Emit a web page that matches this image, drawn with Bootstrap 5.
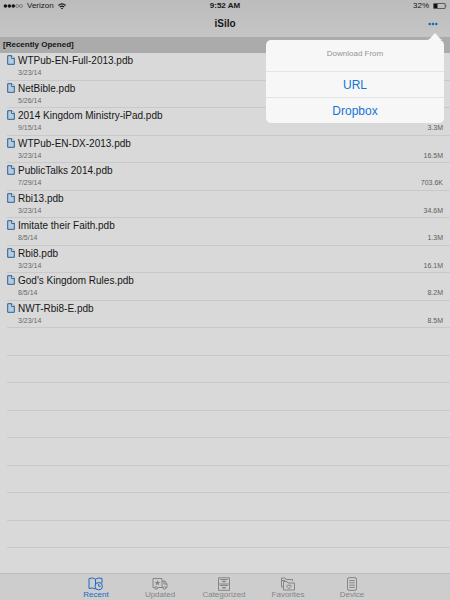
<!DOCTYPE html>
<html lang="en">
<head>
<meta charset="utf-8">
<meta name="viewport" content="width=device-width, initial-scale=1">
<title>iSilo</title>
<link href="https://cdn.jsdelivr.net/npm/bootstrap@5.3.0/dist/css/bootstrap.min.css" rel="stylesheet">
<style>
  body { font-family: "Liberation Sans", Arial, sans-serif; background: #d9d9d9; color: #161616; font-size: 10px; line-height: 12px; }
  a, a:hover { color: inherit; text-decoration: none; }
  svg { display: block; flex: none; }
  .top { background: linear-gradient(#bcbcbc, #c5c5c5); height: 37px; }
  .status { font-size: 8px; line-height: 12px; padding: 0 3px; }
  .status > * { flex: 1 1 0; }
  .title-row { display: grid; grid-template-columns: 1fr auto 1fr; align-items: center; height: 24px; }
  .title-row h1 { font-size: 10px; line-height: 16px; font-weight: 700; margin: 0; grid-column: 2; }
  .more { color: #1c6bb5; border: 0; background: none; padding: 6px 12px; justify-self: end; }
  .section-head { background: #ababab; font-size: 8px; line-height: 16px; font-weight: 700; padding: 0 3px; margin: 0; }
  .files { min-height: 0; overflow: hidden; }
  .file { flex: none; height: 28px; padding-left: 7px; }
  .file:nth-child(even) { height: 27px; }
  .file a, .file > span { height: 100%; border-bottom: 1px solid #c9c9c9; padding-right: 7px; }
  .file svg { margin-top: 2px; }
  .file-text { padding-left: 3px; }
  .name { font-size: 10px; line-height: 12px; padding-top: 2px; }
  .date, .size { font-size: 7px; line-height: 12px; color: #686868; }
  .size { color: #606060; }
  .tabs { background: #cdcdcd; border-top: 1px solid #bcbcbc; color: #858585; height: 27px; padding: 3px 2px 0 0; }
  .tabs a { width: 64px; font-size: 8px; line-height: 8px; }
  .tabs a.current { color: #1c68c4; }
  .sheet { position: absolute; top: 33px; right: 6px; width: 178px; color: #1674d8; }
  .sheet-tip { margin: 0 1px 0 auto; }
  .sheet-body { background: #f7f7f7; border-radius: 5px; }
  .sheet-body h2 { font-size: 8px; line-height: 12px; font-weight: 400; color: #949494; margin: 0; padding: 8px 0 11px; }
  .sheet-body button { display: block; width: 100%; border: 0; border-top: 1px solid #e4e4e4; background: none; color: inherit; font-size: 12px; line-height: 24px; padding: 1px 0 0; }
</style>
<script src="https://cdn.jsdelivr.net/npm/bootstrap@5.3.0/dist/js/bootstrap.bundle.min.js"></script>
</head>
<body>
<svg width="0" height="0" class="position-absolute" aria-hidden="true">
  <symbol id="doc" viewBox="0 0 8 10"><path d="M.7.7h4.200l2.400 2.400v6.200H.7z" fill="#b4cde2" stroke="#2e5f8b"/><path d="M4.600.5v3h3" fill="#dce7f0" stroke="#2e5f8b" stroke-width=".9"/></symbol>
</svg>
<div class="d-flex flex-column vh-100 position-relative overflow-hidden">
  <header class="top flex-shrink-0">
    <div class="status d-flex align-items-center">
      <div class="d-flex align-items-center">
        <svg width="20" height="6" viewBox="0 0 20 6"><g fill="#161616"><circle cx="2.400" cy="3" r="1.800"/><circle cx="6.400" cy="3" r="1.800"/><circle cx="10.300" cy="3" r="1.800"/></g><g fill="none" stroke="#444" stroke-width=".5"><circle cx="14.200" cy="3" r="1.500"/><circle cx="18" cy="3" r="1.500"/></g></svg>
        <span class="ps-1 pe-1">Verizon</span>
        <svg width="8" height="7" viewBox="0 0 8 7" fill="none" stroke="#161616" stroke-width="1.100"><path d="M.4 2.500q3.600-3.300 7.200 0M1.800 4.100q2.200-2 4.400 0"/><path d="M2.900 5.200 4 6.500l1.100-1.300q-1.100-.9-2.200 0z" fill="#161616" stroke="none"/></svg>
      </div>
      <div class="text-center fw-bold">9:52 AM</div>
      <div class="d-flex align-items-center justify-content-end">
        <span class="pe-1">32%</span>
        <svg width="14" height="6" viewBox="0 0 14 6"><rect x=".4" y=".4" width="11.800" height="5.200" rx=".8" fill="none" stroke="#222" stroke-width=".7"/><path d="M1 1h3.500v4H1z" fill="#111"/><path d="M13 2v2q.8-1 0-2z" fill="#222"/></svg>
      </div>
    </div>
    <div class="title-row">
      <h1>iSilo</h1>
      <button class="more" type="button" aria-label="Download"><svg width="10" height="4" viewBox="0 0 10 4" fill="currentColor"><circle cx="1.700" cy="2" r="1.300"/><circle cx="5" cy="2" r="1.300"/><circle cx="8.300" cy="2" r="1.300"/></svg></button>
    </div>
  </header>
  <h2 class="section-head flex-shrink-0">[Recently Opened]</h2>
  <ul class="files list-unstyled m-0 flex-grow-1 d-flex flex-column" id="files"></ul>
  <nav class="tabs flex-shrink-0 d-flex justify-content-center" aria-label="Views">
    <a href="#" class="current d-flex flex-column align-items-center" aria-current="page"><svg width="16" height="14" viewBox="0 0 16 14" fill="none" stroke="currentColor"><path d="M7.500 2.200Q4.500 0 1 1.500v10q3.500-1.200 6.500.5M7.500 2.200Q10.500 0 14 1.500V6M7.500 2.200v5"/><circle cx="10.700" cy="9.200" r="3.700"/><path d="M10.700 6.800v2.400h2"/></svg>Recent</a>
    <a href="#" class="d-flex flex-column align-items-center"><svg width="16" height="14" viewBox="0 0 16 14" fill="none" stroke="currentColor"><path d="M3 10.500H1v-9h9v9H5.500M10 4h3l2 3v3.500h-1M12 4v3h3M10 10.500h1"/><circle cx="4.200" cy="11" r="1.300"/><circle cx="12.500" cy="11" r="1.300"/><path d="m5.500 3 .8 1.900 2 .1-1.500 1.300.5 2-1.800-1.100-1.800 1.100.5-2L2.700 5l2-.1z" fill="currentColor" stroke="none"/></svg>Updated</a>
    <a href="#" class="d-flex flex-column align-items-center"><svg width="14" height="14" viewBox="0 0 14 14" fill="none" stroke="currentColor"><path d="M1.500.8h11v12.500h-11zM1.500 7h11M3 2.500h8M3 8.500h8" /><path d="M5.200 4.500h3.600M5.200 10.700h3.600" stroke-width="1.400"/></svg>Categorized</a>
    <a href="#" class="d-flex flex-column align-items-center"><svg width="16" height="14" viewBox="0 0 16 14" fill="none" stroke="currentColor"><path d="M3 10H1.500V1H5l1 1.500h6.500V4M1.500 3.500H5"/><path d="M3.500 13V4.500H7L8 6h6.500v7z"/><path d="M9 11.700 6.900 9.500Q6.800 7.500 9 8.300q2.200-.8 2.100 1.200z"/></svg>Favorites</a>
    <a href="#" class="d-flex flex-column align-items-center"><svg width="12" height="14" viewBox="0 0 12 14" fill="none" stroke="currentColor"><rect x="1.500" y=".6" width="9" height="12.800" rx="1.500"/><path d="M3.300 3.500h5.400M3.300 5.800h5.400M3.300 8.100h5.400M3.300 10.400h5.400"/></svg>Device</a>
  </nav>
  <div class="sheet" role="dialog" aria-labelledby="sheet-title">
    <svg class="sheet-tip" width="16" height="7" viewBox="0 0 16 7"><path d="M0 7Q2 7 3.500 5L7 1q1-1.500 2 0l3.500 4Q14 7 16 7z" fill="#f7f7f7"/></svg>
    <div class="sheet-body text-center">
      <h2 id="sheet-title">Download From</h2>
      <button type="button">URL</button>
      <button type="button">Dropbox</button>
    </div>
  </div>
</div>
<script>
  const files = [
    ["WTPub-EN-Full-2013.pdb", "3/23/14", ""],
    ["NetBible.pdb", "5/26/14", ""],
    ["2014 Kingdom Ministry-iPad.pdb", "9/15/14", "3.3M"],
    ["WTPub-EN-DX-2013.pdb", "3/23/14", "16.5M"],
    ["PublicTalks 2014.pdb", "7/29/14", "703.6K"],
    ["Rbi13.pdb", "3/23/14", "34.6M"],
    ["Imitate their Faith.pdb", "8/5/14", "1.3M"],
    ["Rbi8.pdb", "3/23/14", "16.1M"],
    ["God's Kingdom Rules.pdb", "8/5/14", "8.2M"],
    ["NWT-Rbi8-E.pdb", "3/23/14", "8.5M"]
  ];
  const rows = files.map(([name, date, size]) => `<li class="file"><a href="#" class="d-flex">
    <svg width="8" height="10"><use href="#doc"/></svg>
    <span class="d-flex flex-column flex-grow-1 file-text"><span class="name">${name}</span>
    <span class="d-flex justify-content-between"><span class="date">${date}</span><span class="size">${size}</span></span></span></a></li>`);
  while (rows.length < 19) rows.push('<li class="file"><span class="d-block"></span></li>');
  document.getElementById("files").innerHTML = rows.join("");
</script>
</body>
</html>
